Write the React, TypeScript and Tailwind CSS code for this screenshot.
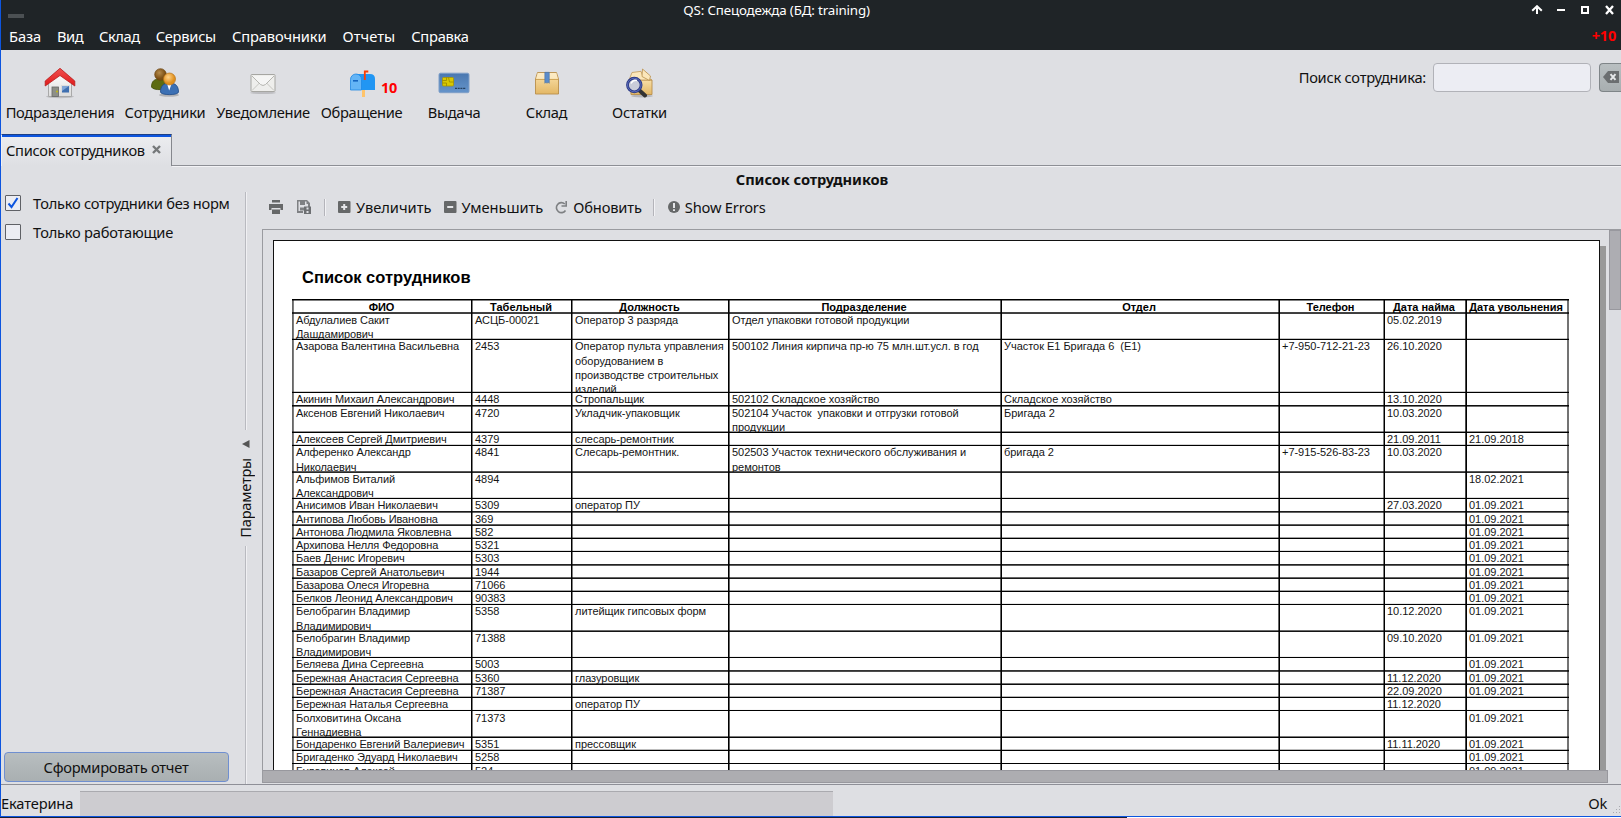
import React from "react";

const UNIT = 13.257;
const TABLE_TOP = 299;
const LINE = 1.5;
const LEADING = 14.33;

type Row = { units: number; cells: string[] };

const r = (units: number, ...cells: string[]): Row => ({ units, cells });

const rows: Row[] = [
  r(2, "Абдулалиев Сакит\nДашдамирович", "АСЦБ-00021", "Оператор 3 разряда", "Отдел упаковки готовой продукции", "", "", "05.02.2019", ""),
  r(4, "Азарова Валентина Васильевна", "2453", "Оператор пульта управления\nоборудованием в\nпроизводстве строительных\nизделий", "500102 Линия кирпича пр-ю 75 млн.шт.усл. в год", "Участок Е1 Бригада 6  (Е1)", "+7-950-712-21-23", "26.10.2020", ""),
  r(1, "Акинин Михаил Александрович", "4448", "Стропальщик", "502102 Складское хозяйство", "Складское хозяйство", "", "13.10.2020", ""),
  r(2, "Аксенов Евгений Николаевич", "4720", "Укладчик-упаковщик", "502104 Участок  упаковки и отгрузки готовой\nпродукции", "Бригада 2", "", "10.03.2020", ""),
  r(1, "Алексеев Сергей Дмитриевич", "4379", "слесарь-ремонтник", "", "", "", "21.09.2011", "21.09.2018"),
  r(2, "Алференко Александр\nНиколаевич", "4841", "Слесарь-ремонтник.", "502503 Участок технического обслуживания и\nремонтов", "бригада 2", "+7-915-526-83-23", "10.03.2020", ""),
  r(2, "Альфимов Виталий\nАлександрович", "4894", "", "", "", "", "", "18.02.2021"),
  r(1, "Анисимов Иван Николаевич", "5309", "оператор ПУ", "", "", "", "27.03.2020", "01.09.2021"),
  r(1, "Антипова Любовь Ивановна", "369", "", "", "", "", "", "01.09.2021"),
  r(1, "Антонова Людмила Яковлевна", "582", "", "", "", "", "", "01.09.2021"),
  r(1, "Архипова Нелля Федоровна", "5321", "", "", "", "", "", "01.09.2021"),
  r(1, "Баев Денис Игоревич", "5303", "", "", "", "", "", "01.09.2021"),
  r(1, "Базаров Сергей Анатольевич", "1944", "", "", "", "", "", "01.09.2021"),
  r(1, "Базарова Олеся Игоревна", "71066", "", "", "", "", "", "01.09.2021"),
  r(1, "Белков Леонид Александрович", "90383", "", "", "", "", "", "01.09.2021"),
  r(2, "Белобрагин Владимир\nВладимирович", "5358", "литейщик гипсовых форм", "", "", "", "10.12.2020", "01.09.2021"),
  r(2, "Белобрагин Владимир\nВладимирович", "71388", "", "", "", "", "09.10.2020", "01.09.2021"),
  r(1, "Беляева Дина Сергеевна", "5003", "", "", "", "", "", "01.09.2021"),
  r(1, "Бережная Анастасия Сергеевна", "5360", "глазуровщик", "", "", "", "11.12.2020", "01.09.2021"),
  r(1, "Бережная Анастасия Сергеевна", "71387", "", "", "", "", "22.09.2020", "01.09.2021"),
  r(1, "Бережная Наталья Сергеевна", "", "оператор ПУ", "", "", "", "11.12.2020", ""),
  r(2, "Болховитина Оксана\nГеннадиевна", "71373", "", "", "", "", "", "01.09.2021"),
  r(1, "Бондаренко Евгений Валериевич", "5351", "прессовщик", "", "", "", "11.11.2020", "01.09.2021"),
  r(1, "Бригаденко Эдуард Николаевич", "5258", "", "", "", "", "", "01.09.2021"),
  r(2, "Булавинов Алексей", "524", "", "", "", "", "", "01.09.2021"),
];

const header = ["ФИО", "Табельный", "Должность", "Подразделение", "Отдел", "Телефон", "Дата найма", "Дата увольнения"];

const cellEdge = [
  "border-l-black/60 shadow-[inset_1px_0_0_rgba(0,0,0,0.5)]",
  "border-l-black shadow-[inset_1px_0_0_rgba(0,0,0,0.5)]",
  "border-l-black shadow-[inset_1px_0_0_rgba(0,0,0,0.5)]",
  "border-l-black shadow-[inset_1px_0_0_rgba(0,0,0,0.6)]",
  "border-l-black/60 shadow-[inset_1px_0_0_#000]",
  "border-l-black/60 shadow-[inset_1px_0_0_#000]",
  "border-l-black/50 shadow-[inset_1px_0_0_#000]",
  "border-l-black/70 shadow-[inset_1px_0_0_#000]",
];

const shade = (coverage: number) => `rgba(0,0,0,${Math.max(0, Math.min(1, coverage)).toFixed(2)})`;

function TableRow({ start, units, cells, head }: { start: number; units: number; cells: string[]; head?: boolean }) {
  const y0 = TABLE_TOP + start * UNIT;
  const top = Math.floor(y0);
  const bottom = Math.floor(TABLE_TOP + (start + units) * UNIT);
  const frac = y0 - top;
  const lineTop = (n: number) => Math.round(y0 + 7.55 + n * LEADING) - top - 7;
  const a = shade(1 - frac);
  const b = shade(frac + LINE - 1);
  return (
    <div
      className="grid grid-cols-[179px_100px_157px_272px_278px_105px_82px_102px] overflow-clip border-r-2 border-r-black/55 [overflow-clip-margin:1px]"
      style={{ height: bottom - top, backgroundImage: `linear-gradient(${a} 0 1px, ${b} 1px 2px, transparent 2px)` }}
    >
      {cells.map((c, i) => (
        <div key={i} className={`h-full min-h-0 border-l ${cellEdge[i]}`}>
          <div
            className={`text-[11px] leading-[14.33px] whitespace-pre ${head ? "pr-[1px] text-center font-bold" : "pl-[3px] text-[#151515]"} ${i === 0 ? "tracking-[-0.09px]" : "tracking-[-0.03px]"}`}
            style={{ paddingTop: lineTop(0) }}
          >
            {c.split("\n").map((t, n) => (
              <div key={n} style={{ height: lineTop(n + 1) - lineTop(n) }}>{t}</div>
            ))}
          </div>
        </div>
      ))}
    </div>
  );
}

function Table() {
  let k = 1;
  return (
    <div className="ml-[18px] w-[1277px] text-black">
      <TableRow start={0} units={1} cells={header} head />
      {rows.map((row, i) => {
        const start = k;
        k += row.units;
        return <TableRow key={i} start={start} units={row.units} cells={row.cells} />;
      })}
    </div>
  );
}

const HouseIcon = () => (
  <svg width="32" height="32" viewBox="0 0 32 32">
    <defs>
      <linearGradient id="roof" x1="0" y1="0" x2="0" y2="1"><stop offset="0" stopColor="#f05050" /><stop offset="1" stopColor="#e01a1a" /></linearGradient>
      <linearGradient id="wall" x1="0" y1="0" x2="0" y2="1"><stop offset="0" stopColor="#fff" /><stop offset="1" stopColor="#dcdcdc" /></linearGradient>
    </defs>
    <ellipse cx="16" cy="29.6" rx="14" ry="1.6" fill="#000" opacity=".15" />
    <path d="M4.500 14 L16 5 L27.500 14 V29.500 H4.500Z" fill="url(#wall)" stroke="#a9a9a9" />
    <path d="M1.200 19V14L16 1.300 30.800 14v5L16 8.500Z" fill="url(#roof)" stroke="#b81c1c" strokeWidth=".8" strokeLinejoin="round" />
    <rect x="8" y="20" width="6.500" height="9.500" fill="#8d8f88" stroke="#666" strokeWidth=".8" />
    <circle cx="13" cy="24.500" r=".9" fill="#c8c000" />
    <rect x="17.500" y="18.500" width="8" height="7.500" fill="#3f6fb0" stroke="#ddd" />
    <path d="M18 19h7l-7 5z" fill="#7fa5d6" />
  </svg>
);

const PeopleIcon = () => (
  <svg width="32" height="32" viewBox="0 0 32 32">
    <defs>
      <radialGradient id="h1" cx=".4" cy=".35"><stop offset="0" stopColor="#b58b4c" /><stop offset="1" stopColor="#7d5014" /></radialGradient>
      <radialGradient id="h2" cx=".4" cy=".35"><stop offset="0" stopColor="#ffd38a" /><stop offset="1" stopColor="#e0901e" /></radialGradient>
    </defs>
    <ellipse cx="20" cy="28" rx="10" ry="1.700" fill="#000" opacity=".2" />
    <path d="M2.500 20c0-6 3-8 8-8s8 3 8 8c0 3-14 4-16 0Z" fill="#5c6b10" stroke="#414d08" strokeWidth=".8" />
    <circle cx="11.500" cy="7.500" r="5.800" fill="url(#h1)" stroke="#6b430f" strokeWidth=".7" />
    <path d="M11.500 25c0-6 3-9 9-9s9 3 9 9c0 3.500-18 3.500-18 0Z" fill="#3c70b4" stroke="#204a87" strokeWidth=".8" />
    <path d="M18 16.500l2.200 7 2.500-7z" fill="#fff" />
    <circle cx="20.500" cy="12" r="6" fill="url(#h2)" stroke="#b8721a" strokeWidth=".7" />
  </svg>
);

const MailIcon = () => (
  <svg width="32" height="32" viewBox="0 0 32 32">
    <ellipse cx="16" cy="25.800" rx="13" ry="1.200" fill="#000" opacity=".15" />
    <rect x="4" y="7.500" width="24" height="17" rx=".8" fill="#eeeeec" stroke="#a6a6a2" />
    <path d="M5 23.500l8-8M27 23.500l-8-8" stroke="#c6c6c1" />
    <path d="M5 9l8.500 8.500q2.500 2 5 0L27 9" fill="#f5f5f4" stroke="#b5b5b0" />
  </svg>
);

const MailboxIcon = () => (
  <svg width="26" height="28" viewBox="0 0 26 28">
    <rect x="12" y="19" width="3" height="8" fill="#ffc46b" />
    <path d="M6 4h14q5 0 5 5v11H6z" fill="#2196f3" />
    <path d="M0.500 20V9.500a5.500 5.500 0 0 1 11 0V20Z" fill="#64b5f6" stroke="#1e88e5" strokeWidth=".8" />
    <rect x="3" y="10" width="5" height="1.600" fill="#1565c0" />
    <path d="M14.800 10V1.500h3.500" fill="none" stroke="#ff3d00" strokeWidth="1.800" />
  </svg>
);

const CardIcon = () => (
  <svg width="32" height="22" viewBox="0 0 32 22">
    <defs><linearGradient id="cd" x1="0" y1="0" x2="0" y2="1"><stop offset="0" stopColor="#4a78b0" /><stop offset="1" stopColor="#6594ca" /></linearGradient></defs>
    <rect x="1" y="1.200" width="30" height="19.500" rx="1.500" fill="url(#cd)" stroke="#7f9fc8" />
    <rect x="4.500" y="5.500" width="11" height="8.500" rx="1" fill="#d8c800" stroke="#a89600" strokeWidth=".8" />
    <path d="M4.500 8.500h4v-3M4.500 11h4v3M15.500 10h-4l-1 -4.500" fill="none" stroke="#9a8800" strokeWidth=".8" />
    <path d="M17 16.300h11" stroke="#25405f" strokeWidth="1.300" strokeDasharray="2 .7" />
  </svg>
);

const BoxIcon = () => (
  <svg width="30" height="28" viewBox="0 0 30 28">
    <defs><linearGradient id="bx" x1="0" y1="0" x2="0" y2="1"><stop offset="0" stopColor="#fbe3ae" /><stop offset="1" stopColor="#e3b765" /></linearGradient></defs>
    <path d="M5.500 3.500h19l2 6.500v15h-23v-15z" fill="url(#bx)" stroke="#b98f4a" strokeWidth=".9" />
    <path d="M4 10.500h22" stroke="#d1a658" />
    <path d="M5.700 4h18.600l1.600 5.800H4.100z" fill="#fdf0cf" opacity=".7" />
    <path d="M12.800 3.300h4.500v11l-1.200-1-1.100 1-1.100-1-1.100 1z" fill="#5b8cca" stroke="#3b68a4" strokeWidth=".5" />
  </svg>
);

const BoxSearchIcon = () => (
  <svg width="30" height="30" viewBox="0 0 30 30">
    <defs><linearGradient id="bs" x1="0" y1="0" x2="0" y2="1"><stop offset="0" stopColor="#f8dfa8" /><stop offset="1" stopColor="#e3b765" /></linearGradient></defs>
    <ellipse cx="17" cy="28" rx="11" ry="1.500" fill="#000" opacity=".18" />
    <path d="M5 12h22v14.500H6z" fill="url(#bs)" stroke="#b98f4a" strokeWidth=".9" />
    <path d="M7 4.500l9-1.200 1.500 4.200L27 12H4z" fill="#fbe7bb" stroke="#c29b58" strokeWidth=".8" />
    <path d="M17.500 1l8 7-1 4.500-7.500-4z" fill="#fbe7bb" stroke="#b98f4a" strokeWidth=".8" />
    <path d="M14.500 22.500l5.500 5" stroke="#333" strokeWidth="4" strokeLinecap="round" />
    <circle cx="9.300" cy="17" r="6.800" fill="#c9ccd9" stroke="#2c3a86" strokeWidth="2.800" />
    <circle cx="9.300" cy="17" r="6.800" fill="none" stroke="#5a6cba" strokeWidth="1" />
    <path d="M6 15.500q2-4 6-3" stroke="#fff" strokeWidth="1.400" fill="none" />
  </svg>
);

function Tool({ icon, label, width }: { icon: React.ReactNode; label: string; width: string }) {
  return (
    <div className={`flex shrink-0 flex-col items-center ${width}`}>
      <div className="flex h-[38px] items-center">{icon}</div>
      <div className="-mt-px leading-[22px] tracking-[-0.3px] whitespace-nowrap">{label}</div>
    </div>
  );
}

const Sep = ({ className }: { className: string }) => (
  <div className={`h-[17px] w-[2px] border-l border-l-[#b4b4ba] bg-[#f2f2f5] ${className}`} />
);

export default function App() {
  return (
    <div className="flex h-[818px] w-[1621px] flex-col overflow-hidden bg-[#dedfe3] font-['Noto_Sans',sans-serif] text-[14.67px] tracking-[-0.25px] text-[#111]">
      <div className="flex h-[817px] flex-col border-b border-l border-[#0d55df]">
        {/* window title */}
        <div className="grid h-[22px] shrink-0 grid-cols-[1fr_auto_1fr] bg-[#1f2427] text-white">
          <div className="mt-[14px] ml-[7px] h-[4px] w-[16px] bg-[#4b5053]" />
          <div className="-ml-[69px] text-[13.33px] leading-[20px] tracking-[-0.15px]">QS: Спецодежда (БД: training)</div>
          <svg className="mt-[5px] mr-[6px] justify-self-end" width="84" height="10" viewBox="0 0 84 10" fill="none" stroke="#fff" strokeWidth="2">
            <path d="M6 9V3M1.200 5.800L6 1.200l4.800 4.600" />
            <path d="M26 5h8" />
            <rect x="51" y="2" width="6" height="6" />
            <path d="M75 1l7 8M82 1l-7 8" strokeWidth="2.300" />
          </svg>
        </div>
        {/* menu */}
        <div className="flex h-[28px] shrink-0 items-center gap-[16px] bg-[#1f2427] pr-[5px] pl-[8px] text-white">
          <span className="leading-[28px] tracking-[-0.1px]">База</span>
          <span className="tracking-[-0.5px]">Вид</span>
          <span className="tracking-[-0.45px]">Склад</span>
          <span>Сервисы</span>
          <span className="tracking-[-0.12px]">Справочники</span>
          <span className="tracking-[0.05px]">Отчеты</span>
          <span>Справка</span>
          <span className="ml-auto text-[14.500px] font-bold tracking-[-0.2px] text-[#f00]">+10</span>
        </div>
        {/* toolbar */}
        <div className="flex h-[84px] shrink-0 pt-[14px]">
          <Tool width="w-[118px]" label="Подразделения" icon={<HouseIcon />} />
          <Tool width="w-[92px]" label="Сотрудники" icon={<PeopleIcon />} />
          <Tool width="w-[104px]" label="Уведомление" icon={<MailIcon />} />
          <Tool
            width="w-[93px]"
            label="Обращение"
            icon={<div className="mt-[2px] ml-[24px] flex items-center gap-[5px]"><MailboxIcon /><span className="mt-[6px] text-[14.500px] leading-[20px] font-bold tracking-[-0.2px] text-[#f00]">10</span></div>}
          />
          <Tool width="w-[92px]" label="Выдача" icon={<CardIcon />} />
          <Tool width="w-[93px]" label="Склад" icon={<BoxIcon />} />
          <Tool width="w-[93px]" label="Остатки" icon={<BoxSearchIcon />} />
          <div className="-mt-px ml-auto flex shrink-0">
            <div className="mt-[3px] mr-[7px] leading-[22px]">Поиск сотрудника:</div>
            <div className="h-[29px] w-[158px] rounded-[4px] border border-[#b1b2b8] bg-[#ecedf3]" />
            <div className="ml-[8px] flex h-[29px] w-[22px] items-center overflow-hidden rounded-l-[4px] border border-r-0 border-[#7f8588] bg-gradient-to-b from-[#b9bfc1] to-[#a8aeb0] pl-[3px]">
              <svg width="17" height="12" viewBox="0 0 17 12" className="-mt-px shrink-0">
                <path d="M0 6l5-6h11v12H5z" fill="#6b6e70" />
                <path d="M7.500 3.200l5 5.600M12.500 3.200l-5 5.600" stroke="#e6e8ea" strokeWidth="2" />
              </svg>
            </div>
          </div>
        </div>
        {/* tab strip */}
        <div className="flex h-[32px] shrink-0">
          <div className="flex w-[171px] shrink-0 items-center border-t border-r border-l border-t-[#1d3f86] border-r-[#85878d] border-l-[#f1f1f4] bg-gradient-to-b from-[#ecedf0] to-[#dedfe3] pb-[2px] pl-[4px] shadow-[inset_0_2px_0_#0d55df]">
            <span className="tracking-[-0.28px] whitespace-nowrap">Список сотрудников</span>
            <svg className="ml-[7px] shrink-0" width="9" height="9" viewBox="0 0 9 9" stroke="#75787a" strokeWidth="2.400"><path d="M1 1l7 7M8 1L1 8" /></svg>
          </div>
          <div className="grow border-b border-b-[#8d8f95] shadow-[0_1px_0_#f3f3f6]" />
        </div>
        {/* page */}
        <div className="flex h-[619px] shrink-0 flex-col border-b border-b-[#8e8f97]">
          <div className="ml-[2px] h-[26px] shrink-0 text-center text-[14.67px] leading-[27px] font-bold tracking-[-0.1px]">Список сотрудников</div>
          <div className="flex h-[592px]">
            <div className="flex w-[235px] shrink-0 flex-col pl-[4px]">
              <div className="mt-[2px] flex h-[18px] items-center">
                <div className="flex size-[16px] items-center justify-center rounded-[1px] border border-[#5f6166] bg-[#ecedf3]">
                  <svg width="12" height="12" viewBox="0 0 12 12" fill="none" stroke="#0d55df" strokeWidth="2"><path d="M1.500 6.500l3 3.500 6-9" /></svg>
                </div>
                <span className="ml-[12px] tracking-[-0.28px] whitespace-nowrap">Только сотрудники без норм</span>
              </div>
              <div className="mt-[11px] flex h-[18px] items-center">
                <div className="size-[16px] rounded-[1px] border border-[#5f6166] bg-[#ecedf3]" />
                <span className="ml-[12px]">Только работающие</span>
              </div>
              <div className="mt-auto mb-[2px] -ml-px flex h-[30px] w-[225px] items-center justify-center rounded-[4px] border border-[#6f8fd0] bg-gradient-to-b from-[#b8bec0] to-[#a9afb1] pr-[1px]">Сформировать отчет</div>
            </div>
            {/* splitter */}
            <div className="flex w-[20px] shrink-0 flex-col items-center">
              <div className="h-[238px] w-[2px] shrink-0 border-l border-l-[#b9bac0] bg-[#f0f0f3]" />
              <svg className="mt-[10px] shrink-0" width="8" height="8" viewBox="0 0 8 8"><path d="M0 4l7.500-4v8z" fill="#555" /></svg>
              <div className="mt-[10px] mr-[2px] mb-auto rotate-180 leading-[20px] [writing-mode:vertical-rl]">Параметры</div>
              <div className="h-[238px] w-[2px] shrink-0 border-l border-l-[#b9bac0] bg-[#f0f0f3]" />
            </div>
            <div className="flex min-w-0 grow flex-col">
              <div className="flex h-[37px] shrink-0 items-center pb-[7px]">
                <svg className="ml-[13px]" width="14" height="14" viewBox="0 0 14 14" fill="#666869"><path d="M3 0h8v2.500H3zM0 4h14v6h-2.500V8h-9v2H0zM3 9.500h8V14H3z" /></svg>
                <svg className="ml-[14px]" width="14" height="14" viewBox="0 0 14 14">
                  <path d="M0 0h10l3 3v4h-2V4H9.500V1.500H8V5H3V1.500H1.500V11H6v2H0z" fill="#7e8083" />
                  <path d="M3 7.500h4v3H3z" fill="#7e8083" /><path d="M5 1h2v3H5z" fill="#7e8083" />
                  <path d="M7 6.500h7V14H7z" fill="#6d6f72" /><path d="M9.500 11h2v2h-2zM9.500 7.500h2v2h-2z" fill="#dedfe3" />
                </svg>
                <Sep className="ml-[13px]" />
                <svg className="ml-[12px]" width="13" height="12" viewBox="0 0 13 12"><rect width="12.500" height="12" rx="1" fill="#666869" /><path d="M6.200 3v6M3.200 6h6" stroke="#e4e5e8" strokeWidth="2" /></svg>
                <span className="ml-[5px] tracking-normal">Увеличить</span>
                <svg className="ml-[13px]" width="13" height="12" viewBox="0 0 13 12"><rect width="12.500" height="12" rx="1" fill="#666869" /><path d="M3.200 6h6" stroke="#e4e5e8" strokeWidth="2" /></svg>
                <span className="ml-[4px] tracking-[-0.05px]">Уменьшить</span>
                <svg className="ml-[12px]" width="13" height="13" viewBox="0 0 13 13" fill="none" stroke="#7e8083" strokeWidth="1.600"><path d="M10.500 9.500A5 5 0 1 1 9.800 3" /><path d="M11.200 0v5H6.500" /></svg>
                <span className="ml-[5px] tracking-[-0.15px]">Обновить</span>
                <Sep className="ml-[11px]" />
                <svg className="ml-[13px]" width="12" height="12" viewBox="0 0 12 12"><circle cx="6" cy="6" r="6" fill="#666869" /><path d="M6 2v5M6 8.300v1.700" stroke="#e4e5e8" strokeWidth="2" /></svg>
                <span className="ml-[5px] tracking-[-0.2px]">Show Errors</span>
              </div>
              {/* report preview */}
              <div className="ml-[6px] flex h-[554px] flex-col border-t border-l border-[#9a9ba0]">
                <div className="flex h-[540px] shrink-0">
                  <div className="flex grow overflow-hidden pt-[10px] pl-[10px]">
                    <div className="h-[540px] w-[1327px] shrink-0 overflow-hidden border border-[#111] bg-white font-['Liberation_Sans',sans-serif]">
                      <div className="h-[58px] pt-[24px] pl-[28px] text-[16.500px] leading-[24px] font-bold tracking-normal text-black">Список сотрудников</div>
                      <Table />
                    </div>
                    <div className="mt-[6px] w-[6px] shrink-0 bg-[#999]" />
                  </div>
                  <div className="w-[12px] shrink-0 bg-[#dcdde2]">
                    <div className="h-[80px] w-[12px] border border-[#98989e] bg-[#adadb2]" />
                  </div>
                </div>
                <div className="h-[13px] w-[1345px] shrink-0 border-t border-r border-b border-[#98989e] bg-[#adadb1]" />
              </div>
            </div>
          </div>
        </div>
        {/* status bar */}
        <div className="flex h-[31px] shrink-0">
          <div className="w-[79px] shrink-0 pt-[7px] leading-[22px] tracking-[-0.15px]">Екатерина</div>
          <div className="mt-[6px] h-[25px] w-[753px] border-t border-t-[#aaaaaf] bg-[#cdccd0]" />
          <div className="mr-[5px] ml-auto pt-[7px] leading-[22px]">Ok</div>
          <svg className="mt-[21px] -ml-px" width="10" height="10" viewBox="0 0 10 10" fill="#a9aab0"><path d="M8 0h1v1H8zM5 3h1v1H5zM8 3h1v1H8zM2 6h1v1H2zM5 6h1v1H5zM8 6h1v1H8z" /></svg>
        </div>
      </div>
      <div className="flex h-px shrink-0"><div className="w-[1127px] bg-[#1a1f33]" /><div className="grow bg-white" /></div>
    </div>
  );
}
